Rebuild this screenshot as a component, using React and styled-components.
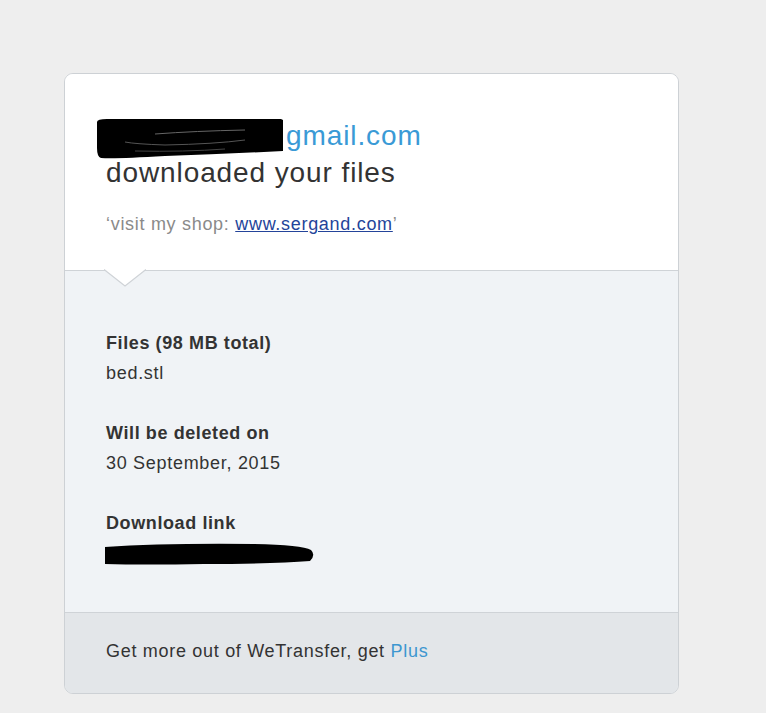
import React from "react";
import styled, { createGlobalStyle } from "styled-components";

const Global = createGlobalStyle`
  html, body { margin: 0; padding: 0; background: #eeeeee; }
  body { font-family: "Liberation Sans", Arial, sans-serif; }
`;

const Page = styled.div`
  padding: 73px 0 20px 64px;
`;

const Card = styled.div`
  width: 613px;
  border: 1px solid #cdd1d5;
  border-radius: 9px;
  overflow: hidden;
  background: #f0f3f6;
`;

const Header = styled.div`
  position: relative;
  background: #ffffff;
  padding: 43px 40px 34px 41px;
  border-bottom: 1px solid #cfd3d7;
`;

const Title = styled.div`
  font-size: 28px;
  line-height: 37px;
  letter-spacing: 0.9px;
  color: #333333;
`;

const Email = styled.div`
  color: #3a9ad6;
`;

const Hidden = styled.span`
  position: relative;
  display: inline-block;
  width: 180px;
  height: 1px;
`;

const TopBlob = styled.svg`
  position: absolute;
  left: -11px;
  top: -26px;
`;

const Message = styled.div`
  margin-top: 21px;
  font-size: 18px;
  line-height: 24px;
  letter-spacing: 0.7px;
  color: #8a8a8a;
`;

const Link = styled.a`
  color: #24449a;
  text-decoration: underline;
`;

const Notch = styled.svg`
  position: absolute;
  left: 39px;
  bottom: -18px;
  display: block;
`;

const Body = styled.div`
  padding: 57px 40px 45px 41px;
  display: flex;
  flex-direction: column;
  gap: 30px;
`;

const Group = styled.div`
  font-size: 18px;
  line-height: 30px;
  letter-spacing: 0.7px;
  color: #333333;
`;

const Label = styled.div`
  font-weight: bold;
  letter-spacing: 0.6px;
`;

const BottomBlob = styled.svg`
  display: block;
  margin: 5px 0 0 -2px;
`;

const Footer = styled.div`
  background: #e3e6e9;
  border-top: 1px solid #cfd3d7;
  padding: 26px 40px 30px 41px;
  font-size: 18px;
  line-height: 24px;
  letter-spacing: 0.7px;
  color: #333333;
`;

const Plus = styled.span`
  color: #3d97d0;
`;

export default function App() {
  return (
    <>
      <Global />
      <Page>
        <Card>
          <Header>
            <Title>
              <Email>
                <Hidden>
                  <TopBlob width="192" height="44" viewBox="0 0 192 44">
                    <path
                      d="M2,4 Q2,1 12,1 L186,1 L188,2 L188,33 Q130,36 70,38 Q20,41 6,40 Q2,39 2,30 Z"
                      fill="#000"
                    />
                    <path d="M60,16 Q100,13 150,12" stroke="#666" strokeWidth="1" fill="none" />
                    <path d="M30,24 Q40,26 70,27 Q120,26 150,22" stroke="#555" strokeWidth="1" fill="none" />
                    <path d="M40,33 Q90,34 130,31" stroke="#444" strokeWidth="1" fill="none" />
                  </TopBlob>
                </Hidden>
                gmail.com
              </Email>
              <div>downloaded your files</div>
            </Title>
            <Message>
              ‘visit my shop: <Link href="#">www.sergand.com</Link>’
            </Message>
            <Notch width="42" height="19" viewBox="0 0 42 19">
              <polygon points="0,0 21,17 42,0" fill="#ffffff" />
              <polyline points="0,0.5 21,17 42,0.5" fill="none" stroke="#cfd3d7" strokeWidth="1.2" />
            </Notch>
          </Header>
          <Body>
            <Group>
              <Label>Files (98 MB total)</Label>
              <div>bed.stl</div>
            </Group>
            <Group>
              <Label>Will be deleted on</Label>
              <div>30 September, 2015</div>
            </Group>
            <Group>
              <Label>Download link</Label>
              <BottomBlob width="212" height="24" viewBox="0 0 212 24">
                <path
                  d="M1,4 Q60,0 150,1 Q198,2 207,7 Q212,12 206,18 Q170,21 100,21 Q40,22 1,21 Z"
                  fill="#000"
                />
              </BottomBlob>
            </Group>
          </Body>
          <Footer>
            Get more out of WeTransfer, get <Plus>Plus</Plus>
          </Footer>
        </Card>
      </Page>
    </>
  );
}
